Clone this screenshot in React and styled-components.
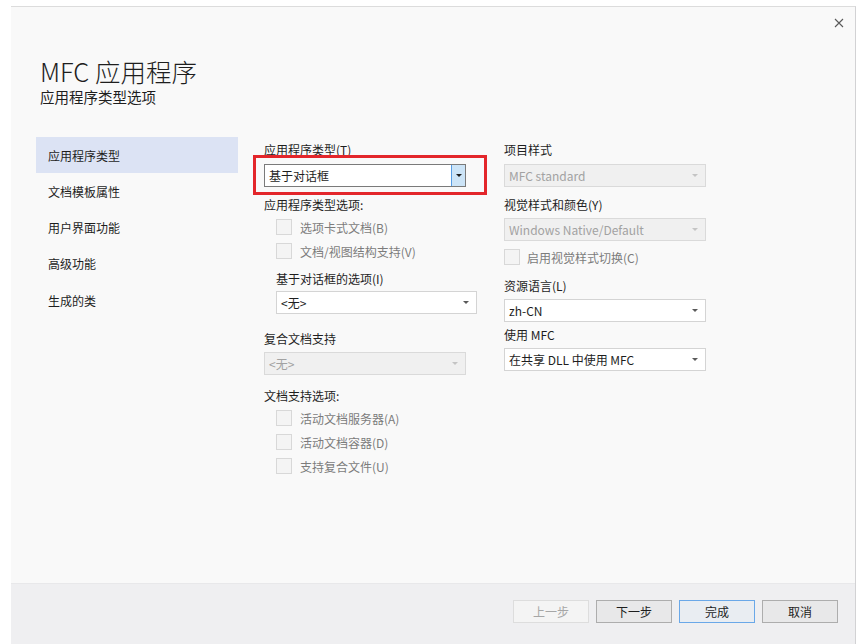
import React from 'react';
import styled, { createGlobalStyle } from 'styled-components';

const GlobalStyle = createGlobalStyle`
  body {
    margin: 0;
    background: #ffffff;
    font-family: "Noto Sans CJK SC", "Noto Sans", sans-serif;
    color: #1e1e1e;
  }
`;

const Dialog = styled.div`
  position: relative;
  display: flex;
  flex-direction: column;
  box-sizing: border-box;
  margin: 6px 0 0 11px;
  width: 845px;
  height: 638px;
  background: #f9f9f9;
  border-top: 1px solid #dcdcdc;
  border-right: 1px solid #d2d2d4;
`;

const CloseButton = styled.div`
  position: absolute;
  top: 11px;
  right: 11px;
  width: 10px;
  height: 10px;
  line-height: 0;
`;

const Header = styled.div`
  box-sizing: border-box;
  height: 130px;
  padding: 51px 0 0 29px;
`;

const Title = styled.div`
  font-size: 25.5px;
  line-height: 26px;
  font-weight: 300;
  color: #1e1e1e;
`;

const Subtitle = styled.div`
  margin-top: 4px;
  font-size: 14.5px;
  line-height: 17px;
  color: #1e1e1e;
`;

const Main = styled.div`
  display: flex;
  flex: 1;
  padding-left: 25px;
`;

const Sidebar = styled.div`
  width: 202px;
  display: flex;
  flex-direction: column;
`;

const NavItem = styled.div`
  height: 36.25px;
  display: flex;
  align-items: center;
  padding-left: 12px;
  font-size: 12px;
  background: ${p => (p.$active ? '#dce3f4' : 'transparent')};
`;

const Column = styled.div`
  display: flex;
  flex-direction: column;
  width: ${p => p.$width}px;
  margin-left: ${p => p.$gap || 0}px;
`;

const FieldLabel = styled.div`
  margin-top: ${p => p.$mt}px;
  margin-left: ${p => p.$indent || 0}px;
  font-size: 12px;
  line-height: 16px;
  color: #1e1e1e;
`;

const SelectWrap = styled.div`
  position: relative;
  margin-top: ${p => p.$mt}px;
  margin-left: ${p => p.$indent || 0}px;
  width: ${p => p.$width || 202}px;
`;

const SelectBox = styled.div`
  box-sizing: border-box;
  display: flex;
  align-items: center;
  height: 23px;
  padding-left: 4px;
  font-size: 12px;
  background: ${p => (p.$disabled ? '#f0f0f0' : '#ffffff')};
  border: 1px solid ${p => (p.$focus ? '#7a7a7a' : p.$disabled ? '#dadada' : '#d4d4d4')};
  color: ${p => (p.$disabled ? '#a2a2a2' : '#1e1e1e')};
`;

const SelectText = styled.span`
  flex: 1;
  white-space: nowrap;
`;

const Arrow = styled.span`
  width: 0;
  height: 0;
  margin-right: 7px;
  border-left: 3px solid transparent;
  border-right: 3px solid transparent;
  border-top: 3px solid ${p => (p.$disabled ? '#c4c4c4' : '#5a5a5a')};
`;

const DropButton = styled.span`
  box-sizing: border-box;
  display: flex;
  align-items: center;
  justify-content: center;
  align-self: stretch;
  width: 14px;
  background: #cce4f7;
  border-left: 1px solid #569de5;
`;

const DropArrow = styled.span`
  width: 0;
  height: 0;
  border-left: 3px solid transparent;
  border-right: 3px solid transparent;
  border-top: 3px solid #1e1e1e;
`;

const RedFrame = styled.div`
  position: absolute;
  left: -11px;
  top: -9px;
  width: 234px;
  height: 40px;
  box-sizing: border-box;
  border: 3px solid #e3262b;
  pointer-events: none;
`;

const CheckRow = styled.div`
  display: flex;
  align-items: center;
  height: 24px;
  margin-top: ${p => p.$mt || 0}px;
  margin-left: ${p => p.$indent || 0}px;
  gap: ${p => p.$gap || 8}px;
  font-size: 12px;
  color: #7c7c7c;
`;

const CheckBox = styled.span`
  box-sizing: border-box;
  width: 16px;
  height: 16px;
  background: #f4f4f4;
  border: 1px solid #d8d8d8;
`;

const Footer = styled.div`
  box-sizing: border-box;
  height: 61px;
  display: flex;
  justify-content: flex-end;
  align-items: flex-start;
  gap: 7px;
  padding: 16px 17px 0 0;
  background: #efeff1;
  border-top: 1px solid #e8e8ea;
`;

const Button = styled.div`
  box-sizing: border-box;
  width: 76px;
  height: 23px;
  display: flex;
  align-items: center;
  justify-content: center;
  font-size: 12px;
  background: ${p => (p.$disabled ? '#f4f4f4' : p.$primary ? '#e9edf2' : '#e8e8e9')};
  border: 1px solid ${p => (p.$disabled ? '#dddddd' : p.$primary ? '#6aa8e8' : '#adadad')};
  color: ${p => (p.$disabled ? '#a6a6a6' : '#1e1e1e')};
`;

function Select({ value, disabled, focus, mt, indent, width, children }) {
  return (
    <SelectWrap $mt={mt} $indent={indent} $width={width}>
      <SelectBox $disabled={disabled} $focus={focus}>
        <SelectText>{value}</SelectText>
        {focus ? (
          <DropButton>
            <DropArrow />
          </DropButton>
        ) : (
          <Arrow $disabled={disabled} />
        )}
      </SelectBox>
      {children}
    </SelectWrap>
  );
}

function Check({ label, mt, indent, gap }) {
  return (
    <CheckRow $mt={mt} $indent={indent} $gap={gap}>
      <CheckBox />
      {label}
    </CheckRow>
  );
}

const navItems = ['应用程序类型', '文档模板属性', '用户界面功能', '高级功能', '生成的类'];

export default function App() {
  return (
    <>
      <GlobalStyle />
      <Dialog>
        <CloseButton>
          <svg width="10" height="10" viewBox="0 0 10 10">
            <path d="M1 1 L9 9 M9 1 L1 9" stroke="#5a5a5a" strokeWidth="1.1" fill="none" />
          </svg>
        </CloseButton>
        <Header>
          <Title>MFC 应用程序</Title>
          <Subtitle>应用程序类型选项</Subtitle>
        </Header>
        <Main>
          <Sidebar>
            {navItems.map((item, i) => (
              <NavItem key={item} $active={i === 0}>{item}</NavItem>
            ))}
          </Sidebar>
          <Column $width={240} $gap={26}>
            <FieldLabel $mt={5}>应用程序类型(T)</FieldLabel>
            <Select value="基于对话框" focus mt={6}>
              <RedFrame />
            </Select>
            <FieldLabel $mt={10}>应用程序类型选项:</FieldLabel>
            <Check label="选项卡式文档(B)" mt={2} indent={12} />
            <Check label="文档/视图结构支持(V)" indent={12} />
            <FieldLabel $mt={8} $indent={12}>基于对话框的选项(I)</FieldLabel>
            <Select value="<无>" mt={4} indent={12} width={201} />
            <FieldLabel $mt={17}>复合文档支持</FieldLabel>
            <Select value="<无>" disabled mt={5} />
            <FieldLabel $mt={13}>文档支持选项:</FieldLabel>
            <Check label="活动文档服务器(A)" mt={2} indent={12} />
            <Check label="活动文档容器(D)" indent={12} />
            <Check label="支持复合文件(U)" indent={12} />
          </Column>
          <Column $width={202}>
            <FieldLabel $mt={5}>项目样式</FieldLabel>
            <Select value="MFC standard" disabled mt={6} />
            <FieldLabel $mt={10}>视觉样式和颜色(Y)</FieldLabel>
            <Select value="Windows Native/Default" disabled mt={5} />
            <Check label="启用视觉样式切换(C)" mt={4} gap={7} />
            <FieldLabel $mt={9}>资源语言(L)</FieldLabel>
            <Select value="zh-CN" mt={5} />
            <FieldLabel $mt={5}>使用 MFC</FieldLabel>
            <Select value="在共享 DLL 中使用 MFC" mt={5} />
          </Column>
        </Main>
        <Footer>
          <Button $disabled>上一步</Button>
          <Button>下一步</Button>
          <Button $primary>完成</Button>
          <Button>取消</Button>
        </Footer>
      </Dialog>
    </>
  );
}
